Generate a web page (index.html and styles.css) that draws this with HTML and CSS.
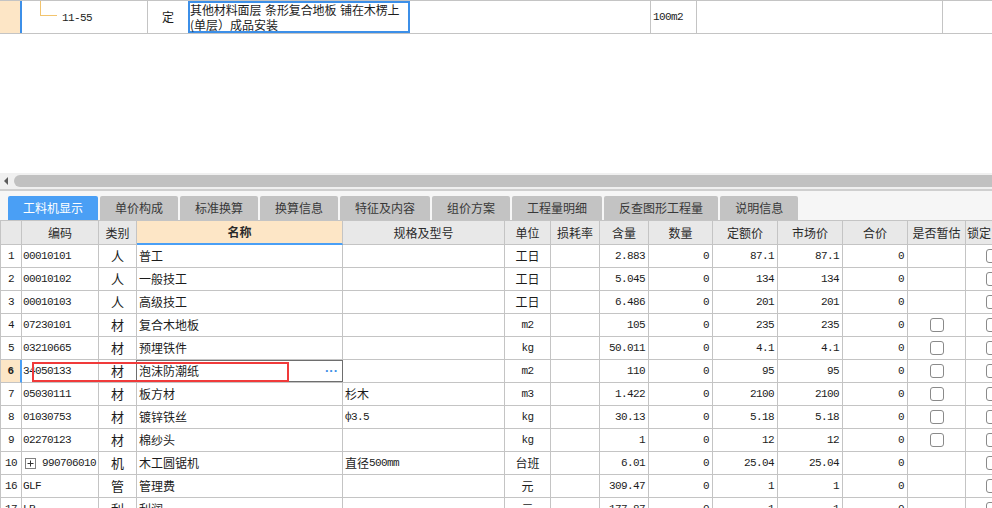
FILE: index.html
```html
<!DOCTYPE html>
<html lang="zh-CN">
<head>
<meta charset="utf-8">
<title>工料机显示</title>
<link rel="stylesheet" href="styles.css">
</head>
<body>
<div class="toprow">
  <div class="t-mark"></div>
  <div class="t-code"><span class="tree"></span><span class="mono">11-55</span></div>
  <div class="t-type">定</div>
  <div class="t-name"><span class="ln l1">其他材料面层 条形复合地板 铺在木楞上</span><span class="ln">(单层）成品安装</span></div>
  <div class="t-spec"></div>
  <div class="t-unit mono">100m2</div>
  <div class="t-qty"></div>
  <div class="t-rest"></div>
</div>

<div class="hscroll"><span class="arrow"></span><span class="thumb"></span></div>

<div class="tabbar">
  <span class="tab active">工料机显示</span>
  <span class="tab">单价构成</span>
  <span class="tab">标准换算</span>
  <span class="tab">换算信息</span>
  <span class="tab">特征及内容</span>
  <span class="tab">组价方案</span>
  <span class="tab">工程量明细</span>
  <span class="tab">反查图形工程量</span>
  <span class="tab">说明信息</span>
</div>

<div class="grid">
  <div class="row head">
    <div></div><div>编码</div><div>类别</div><div class="hname">名称</div><div>规格及型号</div><div>单位</div><div>损耗率</div><div>含量</div><div>数量</div><div>定额价</div><div>市场价</div><div>合价</div><div>是否暂估</div><div class="hl">锁定</div>
  </div>

  <div class="row">
    <div class="n mono">1</div><div class="code mono">00010101</div><div class="cat">人</div><div class="name">普工</div><div class="spec"></div><div class="unit">工日</div><div></div><div class="num mono">2.883</div><div class="num mono">0</div><div class="num mono">87.1</div><div class="num mono">87.1</div><div class="num mono">0</div><div class="est"></div><div class="lock"><span class="cb"></span></div>
  </div>
  <div class="row">
    <div class="n mono">2</div><div class="code mono">00010102</div><div class="cat">人</div><div class="name">一般技工</div><div class="spec"></div><div class="unit">工日</div><div></div><div class="num mono">5.045</div><div class="num mono">0</div><div class="num mono">134</div><div class="num mono">134</div><div class="num mono">0</div><div class="est"></div><div class="lock"><span class="cb"></span></div>
  </div>
  <div class="row">
    <div class="n mono">3</div><div class="code mono">00010103</div><div class="cat">人</div><div class="name">高级技工</div><div class="spec"></div><div class="unit">工日</div><div></div><div class="num mono">6.486</div><div class="num mono">0</div><div class="num mono">201</div><div class="num mono">201</div><div class="num mono">0</div><div class="est"></div><div class="lock"><span class="cb"></span></div>
  </div>
  <div class="row">
    <div class="n mono">4</div><div class="code mono">07230101</div><div class="cat">材</div><div class="name">复合木地板</div><div class="spec"></div><div class="unit mono">m2</div><div></div><div class="num mono">105</div><div class="num mono">0</div><div class="num mono">235</div><div class="num mono">235</div><div class="num mono">0</div><div class="est"><span class="cb"></span></div><div class="lock"><span class="cb"></span></div>
  </div>
  <div class="row">
    <div class="n mono">5</div><div class="code mono">03210665</div><div class="cat">材</div><div class="name">预埋铁件</div><div class="spec"></div><div class="unit mono">kg</div><div></div><div class="num mono">50.011</div><div class="num mono">0</div><div class="num mono">4.1</div><div class="num mono">4.1</div><div class="num mono">0</div><div class="est"><span class="cb"></span></div><div class="lock"><span class="cb"></span></div>
  </div>
  <div class="row current">
    <div class="n mono">6</div><div class="code mono">34050133</div><div class="cat">材</div><div class="name sel">泡沫防潮纸<span class="more">···</span></div><div class="spec"></div><div class="unit mono">m2</div><div></div><div class="num mono">110</div><div class="num mono">0</div><div class="num mono">95</div><div class="num mono">95</div><div class="num mono">0</div><div class="est"><span class="cb"></span></div><div class="lock"><span class="cb"></span></div>
    <span class="mark"></span>
  </div>
  <div class="row">
    <div class="n mono">7</div><div class="code mono">05030111</div><div class="cat">材</div><div class="name">板方材</div><div class="spec">杉木</div><div class="unit mono">m3</div><div></div><div class="num mono">1.422</div><div class="num mono">0</div><div class="num mono">2100</div><div class="num mono">2100</div><div class="num mono">0</div><div class="est"><span class="cb"></span></div><div class="lock"><span class="cb"></span></div>
  </div>
  <div class="row">
    <div class="n mono">8</div><div class="code mono">01030753</div><div class="cat">材</div><div class="name">镀锌铁丝</div><div class="spec mono">ф3.5</div><div class="unit mono">kg</div><div></div><div class="num mono">30.13</div><div class="num mono">0</div><div class="num mono">5.18</div><div class="num mono">5.18</div><div class="num mono">0</div><div class="est"><span class="cb"></span></div><div class="lock"><span class="cb"></span></div>
  </div>
  <div class="row">
    <div class="n mono">9</div><div class="code mono">02270123</div><div class="cat">材</div><div class="name">棉纱头</div><div class="spec"></div><div class="unit mono">kg</div><div></div><div class="num mono">1</div><div class="num mono">0</div><div class="num mono">12</div><div class="num mono">12</div><div class="num mono">0</div><div class="est"><span class="cb"></span></div><div class="lock"><span class="cb"></span></div>
  </div>
  <div class="row">
    <div class="n mono">10</div><div class="code mono"><svg class="plus" width="11" height="11" viewBox="0 0 11 11"><rect x="0.5" y="0.5" width="10" height="10" fill="#fff" stroke="#808080"/><path d="M2.5 5.5h6M5.5 2.5v6" stroke="#333" stroke-width="1"/></svg>990706010</div><div class="cat">机</div><div class="name">木工圆锯机</div><div class="spec">直径<span class="mono">500mm</span></div><div class="unit">台班</div><div></div><div class="num mono">6.01</div><div class="num mono">0</div><div class="num mono">25.04</div><div class="num mono">25.04</div><div class="num mono">0</div><div class="est"></div><div class="lock"><span class="cb"></span></div>
  </div>
  <div class="row">
    <div class="n mono">16</div><div class="code mono">GLF</div><div class="cat">管</div><div class="name">管理费</div><div class="spec"></div><div class="unit">元</div><div></div><div class="num mono">309.47</div><div class="num mono">0</div><div class="num mono">1</div><div class="num mono">1</div><div class="num mono">0</div><div class="est"></div><div class="lock"><span class="cb"></span></div>
  </div>
  <div class="row">
    <div class="n mono">17</div><div class="code mono">LR</div><div class="cat">利</div><div class="name">利润</div><div class="spec"></div><div class="unit">元</div><div></div><div class="num mono">177.87</div><div class="num mono">0</div><div class="num mono">1</div><div class="num mono">1</div><div class="num mono">0</div><div class="est"></div><div class="lock"><span class="cb"></span></div>
  </div>
</div>
</body>
</html>
```

FILE: styles.css
```css
* { box-sizing: border-box; }

html, body { margin: 0; }

body {
  width: 992px;
  height: 508px;
  overflow: hidden;
  background: #fff;
  color: #1c1c1c;
  font-family: "Noto Sans CJK SC", "Noto Sans", sans-serif;
  font-size: 12px;
  line-height: 14px;
}

.mono {
  font-family: "Liberation Mono", "DejaVu Sans Mono", monospace;
  font-size: 11px;
  letter-spacing: -0.6px;
}

/* ---------- top (quota) row ---------- */
.toprow {
  display: grid;
  grid-template-columns: 20px 128px 40px 222px 241px 46px 246px 1fr;
  height: 34px;
  border-top: 1px solid #c4c4c4;
  border-bottom: 1px solid #c4c4c4;
}
.toprow > div { display: flex; align-items: center; }
.t-mark { background: #fde6c6; }
.t-code {
  border-left: 2px solid #3c8fe8;
  border-right: 1px solid #c4c4c4;
}
.tree {
  align-self: flex-start;
  width: 17px;
  height: 15px;
  margin-left: 18px;
  border-left: 1px solid #f2c46e;
  border-bottom: 1px solid #f2c46e;
}
.t-code .mono { margin-left: 5px; margin-top: 1px; }
.t-type { justify-content: center; font-size: 12px; }
.toprow > .t-name {
  flex-direction: column;
  align-items: flex-start;
  justify-content: flex-start;
  padding: 1px 0 0 2px;
  white-space: nowrap;
  overflow: hidden;
  box-shadow: inset 0 0 0 2px #3c8fe8;
}
.t-name .ln { display: block; height: 15px; line-height: 15px; }
.t-name .l1 { letter-spacing: -0.1px; word-spacing: 1px; }
.t-spec, .t-unit, .t-qty { border-right: 1px solid #c4c4c4; }
.t-unit { padding-left: 2px; }

/* ---------- horizontal scrollbar ---------- */
.hscroll {
  margin-top: 139px;
  height: 18px;
  background: #f0f0f0;
  border-bottom: 2px solid #cfcfcf;
  display: flex;
  align-items: center;
}
.arrow {
  margin-left: 4px;
  width: 0;
  height: 0;
  border-top: 4px solid transparent;
  border-bottom: 4px solid transparent;
  border-right: 4px solid #5c5c5c;
}
.thumb {
  flex: 1;
  height: 12px;
  margin-left: 6px;
  background: #c1c1c1;
  border-radius: 6px 0 0 6px;
}

/* ---------- tabs ---------- */
.tabbar {
  display: flex;
  gap: 2px;
  height: 29px;
  padding: 5px 0 0 8px;
  background: #f6f6f6;
}
.tab {
  height: 24px;
  line-height: 24px;
  padding: 0 15px;
  background: #c3c3c3;
  color: #383838;
  border-radius: 2px 2px 0 0;
  white-space: nowrap;
}
.tab.active { background: #4a9ff5; color: #fff; }

/* ---------- grid ---------- */
.grid { border-top: 1px solid #c4c4c4; }
.row {
  position: relative;
  display: grid;
  grid-template-columns: 21px 77px 38px 206px 162px 46px 49px 49px 64px 65px 65px 65px 58px 58px;
  height: 23px;
  border-left: 1px solid #c4c4c4;
}
.row > div {
  display: flex;
  align-items: center;
  border-right: 1px solid #c4c4c4;
  border-bottom: 1px solid #c4c4c4;
  white-space: nowrap;
  overflow: hidden;
}
.row.head { height: 24px; }
.head > div {
  justify-content: center;
  background: #e8e8e8;
  color: #2a2a2a;
}
.head > .hname {
  background: #fde6c6;
  font-weight: bold;
  border-bottom: 2px solid #4a9ff5;
}
.head > .hl { justify-content: flex-start; padding-left: 1px; }

.n { justify-content: center; }
.code { padding-left: 1px; }
.cat { justify-content: center; font-size: 13px; }
.name { padding-left: 2px; }
.spec { padding-left: 2px; }
.unit { justify-content: center; }
.num { justify-content: flex-end; padding-right: 3px; }
.est { justify-content: center; }
.lock { padding-left: 20px; }

.cb {
  width: 14px;
  height: 14px;
  border: 1px solid #8a8a8a;
  border-radius: 3px;
  background: #fff;
}

.plus { margin: 0 6px 0 2px; flex: none; }

/* current row */
.current > .n {
  background: #fde6c6;
  font-weight: bold;
  border-right: 2px solid #4a9ff5;
}
.row > .sel { position: relative; overflow: visible; }
.sel::after {
  content: "";
  position: absolute;
  top: 0;
  bottom: 0;
  left: -1px;
  right: -1px;
  border: 1px solid #6e6e6e;
}
.more {
  margin-left: auto;
  margin-right: 4px;
  font-family: "Liberation Sans", Arial, sans-serif;
  font-size: 13px;
  font-weight: bold;
  color: #3f8fe6;
  letter-spacing: 0;
}
.mark {
  position: absolute;
  top: 2px;
  left: 31px;
  width: 257px;
  height: 20px;
  border: 2px solid #f03a3a;
  pointer-events: none;
}
```
